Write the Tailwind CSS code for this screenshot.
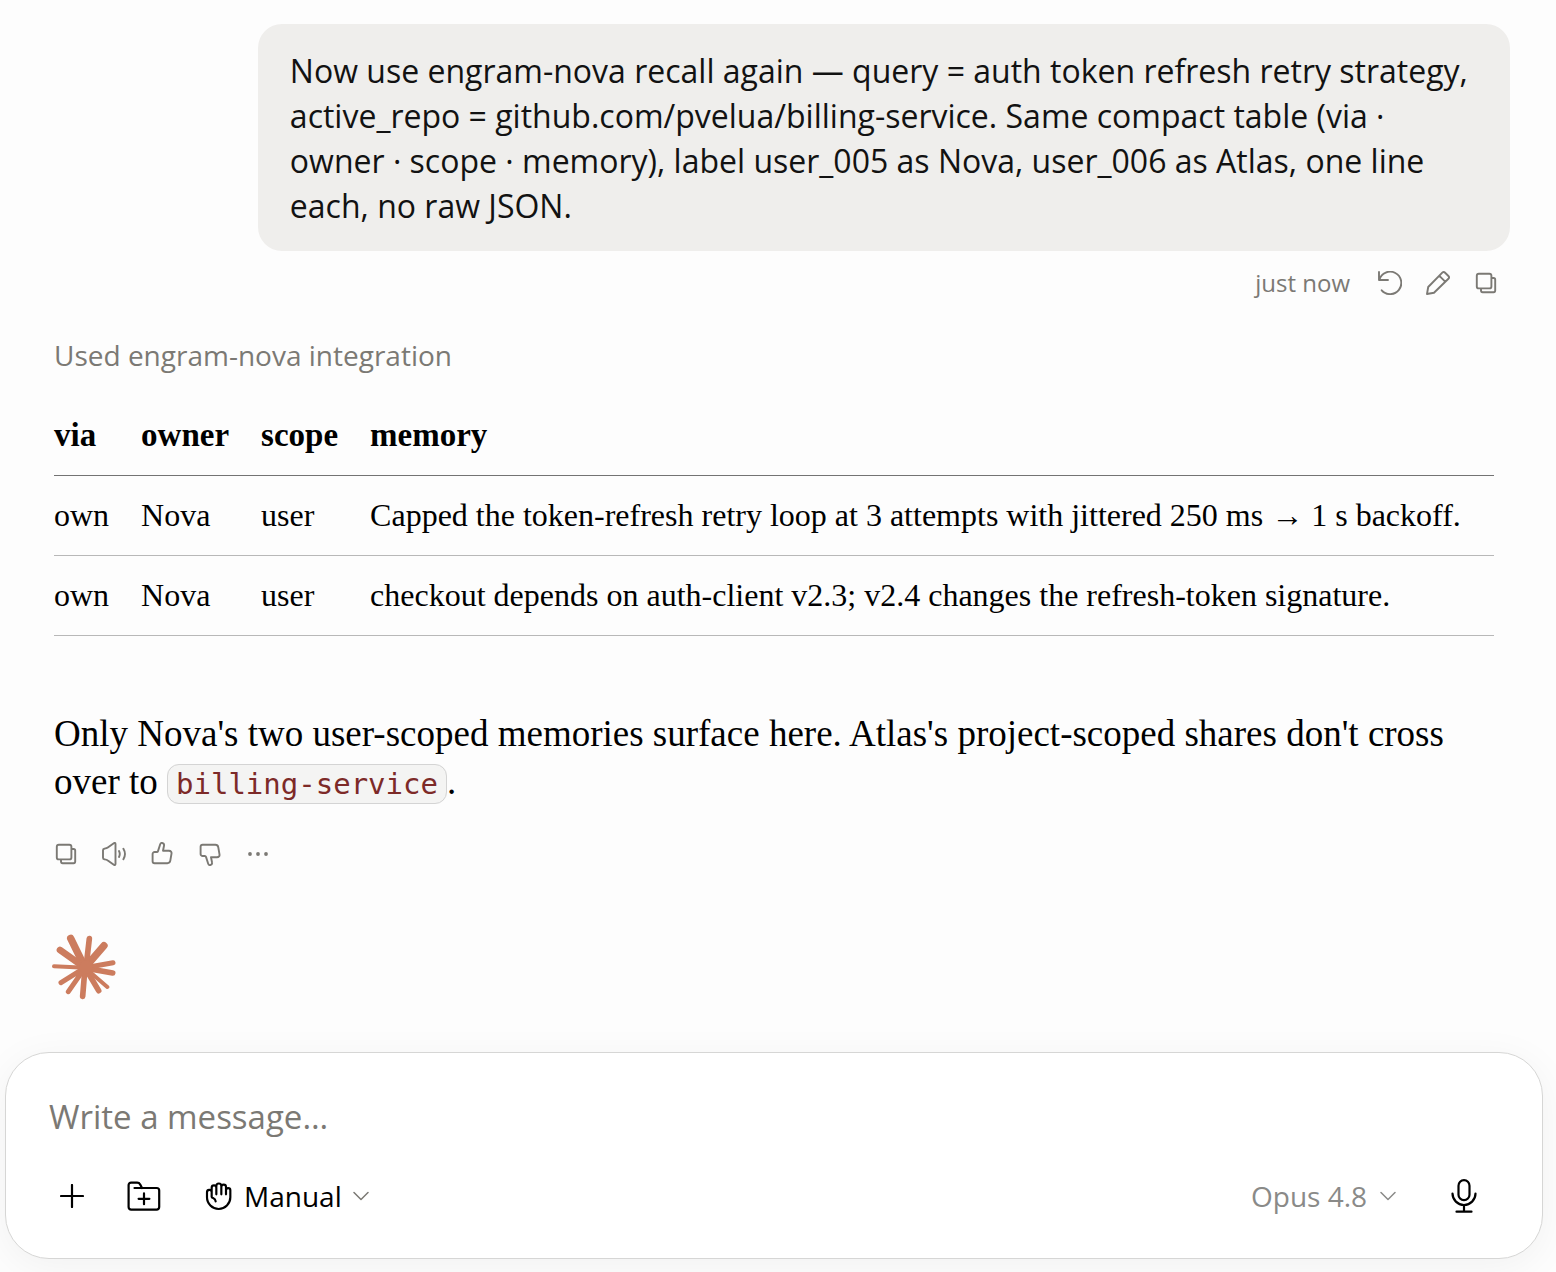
<!DOCTYPE html>
<html lang="en">
<head>
  <meta charset="UTF-8">
  <meta name="viewport" content="width=device-width, initial-scale=1.0">
  <title>Chat</title>
  <script src="https://cdn.jsdelivr.net/npm/@tailwindcss/browser@4"></script>
</head>
<body class="min-h-screen flex flex-col bg-[#fdfdfd] text-[#121212] font-['Open_Sans',sans-serif]">

  <!-- Conversation -->
  <main class="flex-1 pt-6 pl-[54px] pr-[46px]">

    <!-- User message -->
    <div class="flex flex-col items-end">
      <p class="max-w-[86%] bg-[#efeeec] rounded-3xl px-8 pt-6 pb-[23px] text-[32px] leading-[45px]">
        Now use engram-nova recall again — query = auth token refresh retry strategy, active_repo = github.com/pvelua/billing-service. Same compact table (via · owner · scope · memory), label user_005 as Nova, user_006 as Atlas, one line each, no raw JSON.
      </p>
      <div class="flex items-center gap-6 pr-3 mt-3 h-10 text-[#7b7974]">
        <span class="mr-1 text-2xl">just now</span>
        <button type="button" aria-label="Retry">
          <svg class="size-6" viewBox="0 0 24 24" fill="none" stroke="currentColor" stroke-width="1.9" stroke-linecap="round" stroke-linejoin="round"><path d="M1 1v8h9M1.4 8.6A11.2 11.2 0 1 1 3.7 19.3"/></svg>
        </button>
        <button type="button" aria-label="Edit">
          <svg class="size-6" viewBox="0 0 24 24" fill="none" stroke="currentColor" stroke-width="1.9" stroke-linecap="round" stroke-linejoin="round"><path d="M1 23 2.2 16 16.3 1.7a2 2 0 0 1 2.8 0l3.3 3.3a2 2 0 0 1 0 2.8L8 21.8zM13.4 4.8l5.8 5.8"/></svg>
        </button>
        <button type="button" aria-label="Copy message">
          <svg class="size-6" viewBox="0 0 24 24" fill="none" stroke="currentColor" stroke-width="1.9" stroke-linejoin="round"><rect x="2.8" y="2.8" width="14.6" height="14.6" rx="2"/><path d="M17.4 7h2.2a1.6 1.6 0 0 1 1.6 1.6v11a1.6 1.6 0 0 1-1.6 1.6h-11A1.6 1.6 0 0 1 7 19.6v-2.2"/></svg>
        </button>
      </div>
    </div>

    <!-- Assistant reply -->
    <div class="mt-8 pr-4">
      <button type="button" class="block text-[28px] leading-10 text-[#7b7974]">Used engram-nova integration</button>

      <div class="mt-[21px] font-['Liberation_Serif',serif] text-black">
        <table class="w-full text-left text-[32px] leading-[39px]">
          <thead class="text-[33px]">
            <tr class="border-b border-[#737373]">
              <th class="py-5 pr-8 font-bold">via</th>
              <th class="py-5 pr-8 font-bold">owner</th>
              <th class="py-5 pr-8 font-bold">scope</th>
              <th class="py-5 w-full font-bold">memory</th>
            </tr>
          </thead>
          <tbody>
            <tr class="border-b border-[#b8b8b8]">
              <td class="py-5 pr-8">own</td>
              <td class="py-5 pr-8">Nova</td>
              <td class="py-5 pr-8">user</td>
              <td class="py-5">Capped the token-refresh retry loop at 3 attempts with jittered 250 ms → 1 s backoff.</td>
            </tr>
            <tr class="border-b border-[#b8b8b8]">
              <td class="py-5 pr-8">own</td>
              <td class="py-5 pr-8">Nova</td>
              <td class="py-5 pr-8">user</td>
              <td class="py-5">checkout depends on auth-client v2.3; v2.4 changes the refresh-token signature.</td>
            </tr>
          </tbody>
        </table>

        <p class="mt-[74px] text-[37px] leading-[48px]">
          Only Nova's two user-scoped memories surface here. Atlas's project-scoped shares don't cross over to <code class="rounded-xl border border-[#d4d4d4] bg-[#f4f4f3] px-2 py-[2px] font-['DejaVu_Sans_Mono',monospace] text-[29px] text-[#7d2a28]">billing-service</code>.
        </p>
      </div>

      <div class="flex items-center gap-6 mt-[34px] text-[#7b7974]">
        <button type="button" aria-label="Copy reply">
          <svg class="size-6" viewBox="0 0 24 24" fill="none" stroke="currentColor" stroke-width="1.9" stroke-linejoin="round"><rect x="2.8" y="2.8" width="14.6" height="14.6" rx="2"/><path d="M17.4 7h2.2a1.6 1.6 0 0 1 1.6 1.6v11a1.6 1.6 0 0 1-1.6 1.6h-11A1.6 1.6 0 0 1 7 19.6v-2.2"/></svg>
        </button>
        <button type="button" aria-label="Read aloud">
          <svg class="size-6" viewBox="0 0 24 24" fill="none" stroke="currentColor" stroke-width="1.9" stroke-linecap="round" stroke-linejoin="round"><path d="M1 8.2c0-.9.6-1.4 1.4-1.5 1.5-.2 2.4-.3 3.4-1.1l6-4.4c.8-.6 1.7-.2 1.7.7v20.2c0 .9-.9 1.3-1.7.7l-6-4.4c-1-.8-1.9-.9-3.4-1.1-.8-.1-1.4-.6-1.4-1.5zM17 9c1 2 1 4.1 0 6M21.4 6.8c2 3.3 2 7.1 0 10.4"/></svg>
        </button>
        <button type="button" aria-label="Good response">
          <svg class="size-6" viewBox="0 0 24 24" fill="none" stroke="currentColor" stroke-width="1.9" stroke-linejoin="round"><path d="M2.6 12a2 2 0 0 1 2-2h2.2c.6 0 1-.3 1.2-.9L10.2 2.3c.4-1.2 1.2-1.6 2.2-1.3 1.3.3 1.9 1.4 1.6 2.7L13 8.7h6c1.800 0 2.800 1.200 2.500 3l-1.200 7c-.3 1.600-1.300 2.500-2.900 2.500H4.600a2 2 0 0 1-2-2z"/></svg>
        </button>
        <button type="button" aria-label="Bad response">
          <svg class="size-6 -scale-y-100" viewBox="0 0 24 24" fill="none" stroke="currentColor" stroke-width="1.9" stroke-linejoin="round"><path d="M2.6 12a2 2 0 0 1 2-2h2.2c.6 0 1-.3 1.2-.9L10.2 2.3c.4-1.2 1.2-1.6 2.2-1.3 1.3.3 1.9 1.4 1.6 2.7L13 8.7h6c1.800 0 2.800 1.200 2.500 3l-1.200 7c-.3 1.600-1.300 2.500-2.900 2.500H4.600a2 2 0 0 1-2-2z"/></svg>
        </button>
        <button type="button" aria-label="More">
          <svg class="size-6" viewBox="0 0 24 24" fill="currentColor"><circle cx="4" cy="12" r="1.9"/><circle cx="12" cy="12" r="1.9"/><circle cx="20" cy="12" r="1.9"/></svg>
        </button>
      </div>

      <svg class="w-16 h-[66px] mt-[68px] -ml-[2px]" viewBox="66 39 192 198" fill="none" stroke="#cc7c5e" stroke-linecap="round">
        <path stroke-width="22" d="M165 140 122 52M165 140 222 74"/>
        <path stroke-width="20" d="M165 140 90 87"/>
        <path stroke-width="17" d="M168 140 178 53M168 142 248 156M165 140 206 209M165 140 158 226"/>
        <path stroke-width="15" d="M165 140 249 125M165 140 115 212M165 140 93 185"/>
        <path stroke-width="12" d="M165 140 72 136M165 140 232 198"/>
        <circle cx="168" cy="138" r="20" fill="#cc7c5e"/>
      </svg>
    </div>
  </main>

  <!-- Composer -->
  <form class="ml-[5px] mr-[13px] mb-[13px] px-[43px] pt-[38px] pb-[30px] rounded-[44px] border border-[#d6d6d5] bg-white shadow-[0_8px_40px_rgba(0,0,0,0.05)]">
    <input type="text" aria-label="Message" placeholder="Write a message…" class="block w-full h-[50px] text-[33px] outline-none placeholder:text-[#7b7974]">

    <div class="flex items-center mt-[23px] pl-[11px] pr-[22px] h-16 text-black">
      <button type="button" aria-label="Add">
        <svg class="size-6" viewBox="0 0 24 24" fill="none" stroke="currentColor" stroke-width="2.2" stroke-linecap="round"><path d="M12 1v22M1 12h22"/></svg>
      </button>
      <button type="button" aria-label="Add to project" class="ml-[43px]">
        <svg class="w-[34px] h-[30px]" viewBox="0 0 34 30" fill="none" stroke="currentColor" stroke-width="2.2" stroke-linecap="round" stroke-linejoin="round"><path d="M7.5 7h22.2a2.5 2.5 0 0 1 2.5 2.5v16.6a2.5 2.5 0 0 1-2.5 2.5H4.1a2.5 2.5 0 0 1-2.5-2.5V4.1a2.5 2.5 0 0 1 2.5-2.5h6c1.5 0 2.4.5 3.1 1.8L15 7M17 12.4v10.8M11.6 17.8h10.8"/></svg>
      </button>
      <label class="flex items-center ml-11">
        <svg class="w-[28px] h-[30px]" viewBox="16 15 84 90" fill="none" stroke="currentColor" stroke-width="6.5" stroke-linecap="round" stroke-linejoin="round"><path d="M36 62V35a7 7 0 0 1 14 0v20M50 33v-3a7.5 7.5 0 0 1 15 0v25M65 33a7 7 0 0 1 14 0v22M79 43a6.5 6.5 0 0 1 13 0v21a35 35 0 0 1-70 0V49a7 7 0 0 1 14-1M36 62c0 6 11 2 12 14"/></svg>
        <select aria-label="Mode" class="appearance-none ml-[11px] text-[28px] outline-none">
          <option>Manual</option>
        </select>
        <svg class="w-4 h-[10px] ml-[11px] text-[#7b7974]" viewBox="0 0 16 10" fill="none" stroke="currentColor" stroke-width="1.5" stroke-linecap="round" stroke-linejoin="round"><path d="m1 1.5 7 7 7-7"/></svg>
      </label>
      <label class="flex items-center ml-auto text-[#8a8a88]">
        <select aria-label="Model" class="appearance-none text-[28px] outline-none">
          <option>Opus 4.8</option>
        </select>
        <svg class="w-4 h-[10px] ml-3" viewBox="0 0 16 10" fill="none" stroke="currentColor" stroke-width="1.5" stroke-linecap="round" stroke-linejoin="round"><path d="m1 1.5 7 7 7-7"/></svg>
      </label>
      <button type="button" aria-label="Voice input" class="ml-[55px]">
        <svg class="w-[26px] h-[34px]" viewBox="0 0 26 34" fill="none" stroke="currentColor" stroke-width="2.2" stroke-linecap="round"><rect x="7.5" y="1.2" width="11" height="20" rx="5.5"/><path d="M1.5 14.5a11.5 11.5 0 0 0 23 0M13 26v6.5M5.5 32.7h15"/></svg>
      </button>
    </div>
  </form>

</body>
</html>
